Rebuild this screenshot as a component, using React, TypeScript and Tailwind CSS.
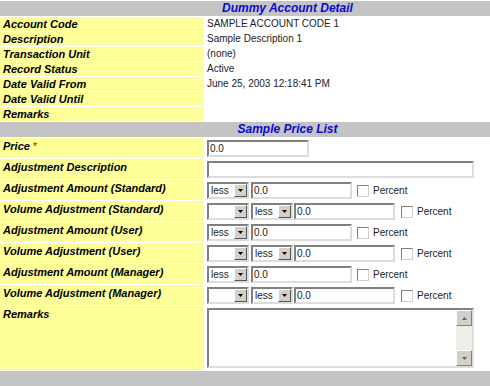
import React from 'react';

const inset =
  'border-2 border-t-[#808080] border-l-[#808080] border-b-[#dcdcdc] border-r-[#dcdcdc] bg-white';

const detailRows = [
  { label: 'Account Code', value: 'SAMPLE ACCOUNT CODE 1' },
  { label: 'Description', value: 'Sample Description 1' },
  { label: 'Transaction Unit', value: '(none)' },
  { label: 'Record Status', value: 'Active' },
  { label: 'Date Valid From', value: 'June 25, 2003 12:18:41 PM' },
  { label: 'Date Valid Until', value: '' },
  { label: 'Remarks', value: '' },
];

const Header = ({ title }: { title: string }) => (
  <div className="h-[15px] bg-[#c4c4c4] pl-[85px] text-center text-[12px] font-bold italic leading-[15px] text-[#0a0ad0]">
    {title}
  </div>
);

const TextBox = ({ value = '', width }: { value?: string; width: string }) => (
  <div className={`${inset} ${width} h-[17px] pl-[1px] text-[10px] leading-[13px] text-[#222]`}>{value}</div>
);

const Arrow = ({ up = false, color = '#000' }: { up?: boolean; color?: string }) => (
  <svg width="5" height="3" viewBox="0 0 5 3">
    <path d={up ? 'M0 3 L5 3 L2.5 0 Z' : 'M0 0 L5 0 L2.5 3 Z'} fill={color} />
  </svg>
);

const SelectBox = ({ value = '' }: { value?: string }) => (
  <div className={`${inset} flex h-[17px] w-[42px] items-stretch`}>
    <div className="flex-1 pl-[2px] text-[10px] leading-[13px] text-[#222]">{value}</div>
    <div className="flex w-[13px] items-center justify-center border border-t-white border-l-white border-b-[#555] border-r-[#555] bg-[#d4d0c8]">
      <Arrow />
    </div>
  </div>
);

const CheckLabel = () => (
  <div className="flex items-center">
    <div className="ml-[5px] h-[12px] w-[12px] border border-t-[#808080] border-l-[#808080] border-b-[#d4d0c8] border-r-[#d4d0c8] bg-white" />
    <span className="ml-[4px] text-[10px] leading-[13px] text-[#222]">Percent</span>
  </div>
);

const Label = ({ children }: { children: React.ReactNode }) => (
  <div className="w-[204px] shrink-0 bg-[#ffff99] pl-[3px] pt-[2px] text-[11px] font-bold italic leading-[13px] text-black">
    {children}
  </div>
);

const AmountRow = ({ label }: { label: string }) => (
  <div className="flex h-[20px] gap-px">
    <Label>{label}</Label>
    <div className="flex items-start pl-[2px] pt-[2px]">
      <SelectBox value="less" />
      <div className="ml-[2px]">
        <TextBox value="0.0" width="w-[101px]" />
      </div>
      <div className="flex h-[17px] items-center">
        <CheckLabel />
      </div>
    </div>
  </div>
);

const VolumeRow = ({ label }: { label: string }) => (
  <div className="flex h-[20px] gap-px">
    <Label>{label}</Label>
    <div className="flex items-start pl-[2px] pt-[2px]">
      <SelectBox />
      <div className="ml-[2px]">
        <SelectBox value="less" />
      </div>
      <div className="ml-[1px]">
        <TextBox value="0.0" width="w-[101px]" />
      </div>
      <div className="ml-[1px] flex h-[17px] items-center">
        <CheckLabel />
      </div>
    </div>
  </div>
);

export default function App() {
  return (
    <div className="flex h-[386px] w-[490px] flex-col gap-px overflow-hidden bg-white pt-px font-['Liberation_Sans',Arial,sans-serif]">
      <Header title="Dummy Account Detail" />
      {detailRows.map(row => (
        <div key={row.label} className="flex h-[14px] gap-px">
          <div className="w-[204px] shrink-0 bg-[#ffff99] pl-[3px] text-[11px] font-bold italic leading-[14px] text-black">
            {row.label}
          </div>
          <div className="flex-1 pl-[2px] text-[10px] leading-[14px] text-[#222]">{row.value}</div>
        </div>
      ))}
      <Header title="Sample Price List" />

      <div className="flex h-[20px] gap-px">
        <Label>
          Price <span className="font-normal not-italic text-[#e00000]">*</span>
        </Label>
        <div className="pl-[2px] pt-[2px]">
          <TextBox value="0.0" width="w-[102px]" />
        </div>
      </div>
      <div className="flex h-[20px] gap-px">
        <Label>Adjustment Description</Label>
        <div className="pl-[2px] pt-[2px]">
          <TextBox width="w-[267px]" />
        </div>
      </div>
      <AmountRow label="Adjustment Amount (Standard)" />
      <VolumeRow label="Volume Adjustment (Standard)" />
      <AmountRow label="Adjustment Amount (User)" />
      <VolumeRow label="Volume Adjustment (User)" />
      <AmountRow label="Adjustment Amount (Manager)" />
      <VolumeRow label="Volume Adjustment (Manager)" />

      <div className="flex h-[64px] gap-px">
        <Label>Remarks</Label>
        <div className="pl-[2px] pt-[2px]">
          <div className={`${inset} flex h-[60px] w-[267px]`}>
            <div className="flex-1" />
            <div className="flex w-[16px] flex-col justify-between bg-[#eeede8]">
              <div className="flex h-[16px] items-center justify-center border border-t-white border-l-white border-b-[#808080] border-r-[#808080] bg-[#d4d0c8]">
                <Arrow up color="#666" />
              </div>
              <div className="flex h-[16px] items-center justify-center border border-t-white border-l-white border-b-[#808080] border-r-[#808080] bg-[#d4d0c8]">
                <Arrow color="#666" />
              </div>
            </div>
          </div>
        </div>
      </div>

      <div className="flex-1 bg-[#c4c4c4]" />
    </div>
  );
}
